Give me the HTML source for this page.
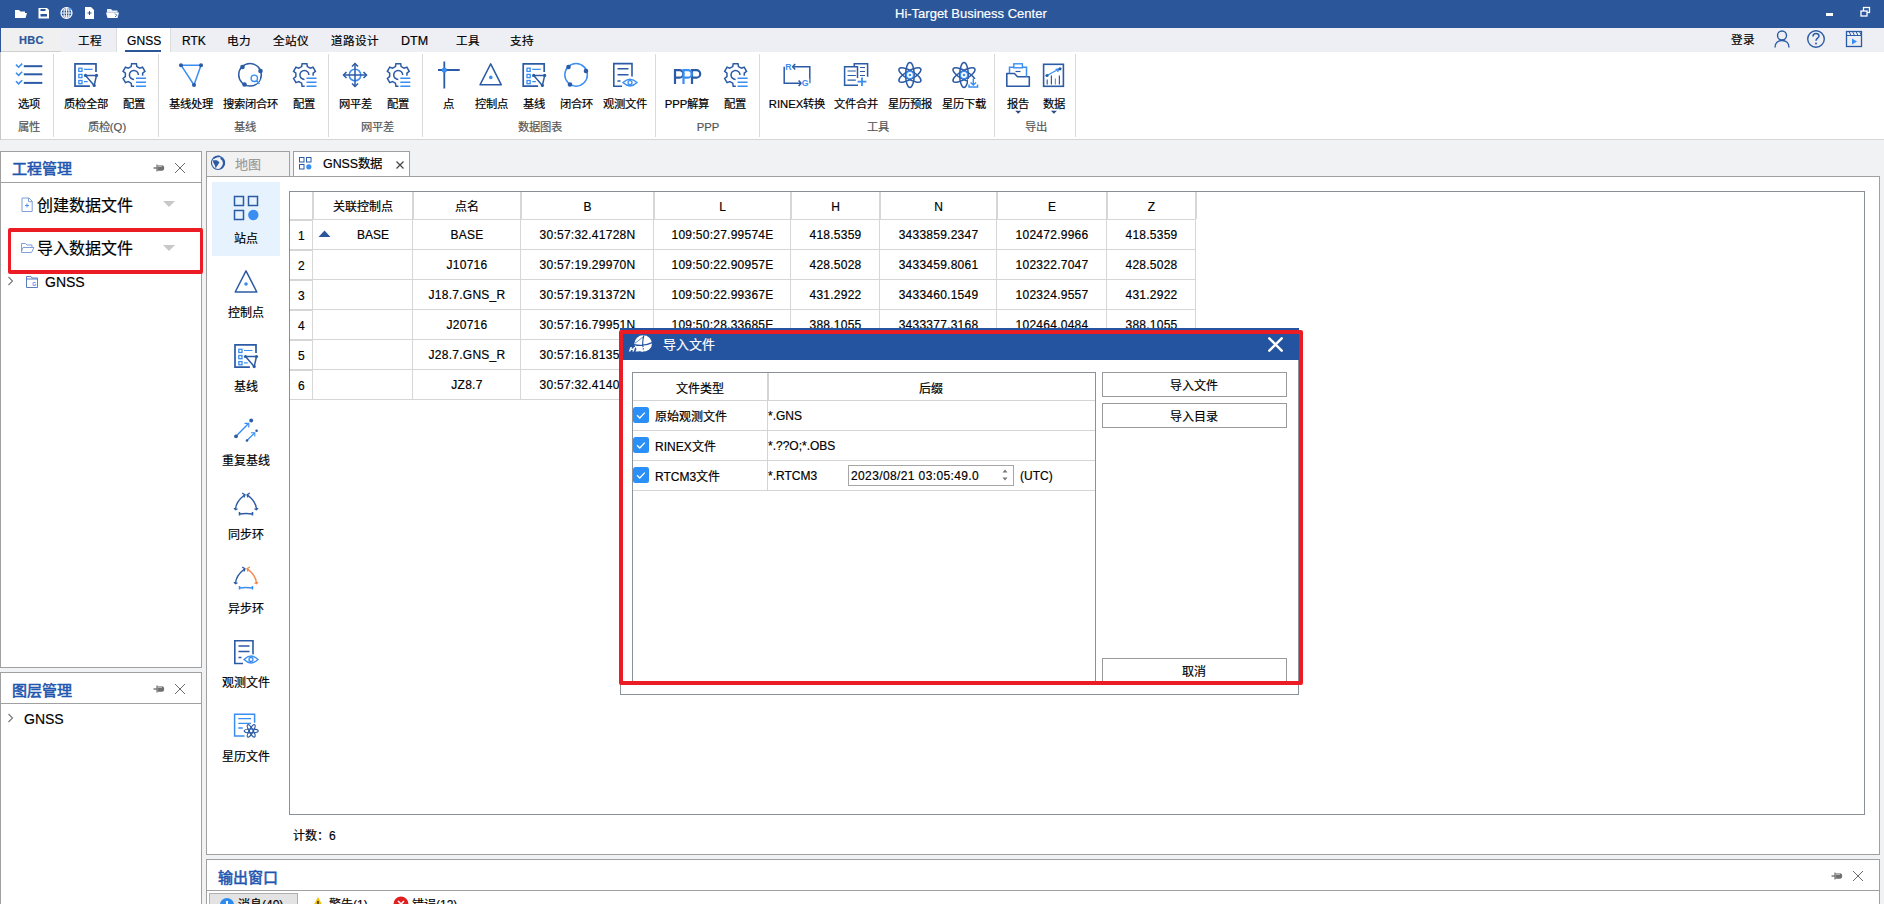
<!DOCTYPE html>
<html lang="zh-CN"><head><meta charset="utf-8">
<style>
*{box-sizing:border-box;margin:0;padding:0}
html,body{width:1884px;height:904px;overflow:hidden;background:#f1f2f4;font-family:"Liberation Sans",sans-serif;color:#000;position:relative}
.a{position:absolute}
.t{position:absolute;white-space:nowrap;line-height:1;-webkit-text-stroke:0.18px currentColor}
svg{position:absolute;overflow:visible}
</style></head><body>

<div class="a" style="left:0px;top:0px;width:1884px;height:28px;background:#2b579a"></div>
<div class="t" style="left:895px;top:7px;font-size:13px;color:#fff;font-weight:normal;">Hi-Target Business Center</div>
<svg style="left:0px;top:0px" width="130" height="28" viewBox="0 0 130 28" fill="none"><path d="M15 10h4l1.5 1.5h4.5v1.5h-10z M15 13h12l-1.5 5h-10.5z" fill="#fff"/><path d="M38.5 8h8.5l2 2v8.5h-10.5z" fill="#fff"/><rect x="40.5" y="9" width="5" height="2" fill="#2b579a"/><rect x="40.5" y="14" width="6.5" height="2.5" fill="#2b579a"/><circle cx="66.5" cy="13" r="5.5" fill="none" stroke="#fff" stroke-width="1.2"/><path d="M61 13h11M66.5 7.5v11M62 10h9M62 16h9" stroke="#fff" stroke-width="0.9"/><ellipse cx="66.5" cy="13" rx="2.5" ry="5.5" stroke="#fff" stroke-width="0.9"/><circle cx="70" cy="9" r="1.3" fill="#5aa8ff"/><path d="M85 7h6l3 3v9h-9z" fill="#fff"/><path d="M89.5 11v4M87.5 13h4" stroke="#2b579a" stroke-width="1"/><path d="M107 9h4l1.5 1.5h5v2h-10.5z" fill="#fff" opacity="0.9"/><path d="M106 12.5h13l-1.5 5.5h-10z" fill="#fff"/><path d="M115 13.5l1.8 1.8-1.8 1.8" stroke="#2b579a" stroke-width="0.9"/></svg>
<div class="a" style="left:1826px;top:13px;width:7px;height:3px;background:#fff"></div>
<svg style="left:1858px;top:5px" width="14" height="14" viewBox="0 0 14 14" fill="none"><rect x="5.5" y="2.5" width="6" height="5" stroke="#fff" stroke-width="1.3"/><rect x="3" y="6" width="6" height="5" fill="#2b579a" stroke="#fff" stroke-width="1.3"/></svg>
<div class="a" style="left:0px;top:28px;width:1884px;height:24px;background:#eeeff4"></div>
<div class="a" style="left:0px;top:28px;width:1px;height:24px;background:#2b579a"></div>
<div class="a" style="left:1px;top:28px;width:60px;height:23px;background:#f0f0f0"></div>
<div class="a" style="left:1px;top:51px;width:60px;height:1px;background:#cfcfcf"></div>
<div class="t" style="left:19px;top:35px;font-size:11px;color:#2b579a;font-weight:bold;letter-spacing:0.3px">HBC</div>
<div class="t" style="left:78px;top:35px;font-size:11.6px;color:#000;font-weight:normal;">工程</div>
<div class="a" style="left:116px;top:28px;width:55px;height:24px;background:#fff;border-left:1px solid #dcdcdc;border-right:1px solid #dcdcdc"></div>
<div class="a" style="left:125px;top:50px;width:36px;height:2px;background:#2b579a"></div>
<div class="t" style="left:127px;top:35px;font-size:12px;color:#000;font-weight:normal;letter-spacing:0.1px">GNSS</div>
<div class="t" style="left:182px;top:35px;font-size:12px;color:#000;font-weight:normal;">RTK</div>
<div class="t" style="left:227px;top:35px;font-size:11.6px;color:#000;font-weight:normal;">电力</div>
<div class="t" style="left:273px;top:35px;font-size:11.6px;color:#000;font-weight:normal;">全站仪</div>
<div class="t" style="left:331px;top:35px;font-size:11.6px;color:#000;font-weight:normal;">道路设计</div>
<div class="t" style="left:401px;top:35px;font-size:12.5px;color:#000;font-weight:normal;">DTM</div>
<div class="t" style="left:456px;top:35px;font-size:11.6px;color:#000;font-weight:normal;">工具</div>
<div class="t" style="left:510px;top:35px;font-size:11.6px;color:#000;font-weight:normal;">支持</div>
<div class="t" style="left:1731px;top:33.5px;font-size:11.6px;color:#000;font-weight:normal;">登录</div>
<svg style="left:1770px;top:28px" width="110" height="24" viewBox="0 0 110 24" fill="none"><circle cx="12" cy="7.5" r="4.5" stroke="#2c5ba5" stroke-width="1.4"/><path d="M5 19.5c0-4.5 3-7 7-7s7 2.5 7 7" stroke="#2c5ba5" stroke-width="1.4"/><circle cx="46" cy="11" r="8.3" stroke="#2c5ba5" stroke-width="1.4"/><path d="M43 8.5c0-2 1.3-3 3-3s3 1 3 2.6c0 2-3 2.2-3 4.6" stroke="#2c5ba5" stroke-width="1.5"/><circle cx="46" cy="15.5" r="1" fill="#2c5ba5"/><rect x="76.5" y="3.5" width="15" height="15" stroke="#2c5ba5" stroke-width="1.3"/><path d="M76.5 7.5h15M79 3.5l2 4M82.5 3.5l2 4M86 3.5l2 4M89.5 3.5l2 4" stroke="#2c5ba5" stroke-width="1"/><path d="M82 10.5l5 3-5 3z" fill="#3a8ef2"/></svg>
<div class="a" style="left:0px;top:52px;width:1884px;height:88px;background:#fff;border-bottom:1px solid #d6d6d6"></div>
<div class="a" style="left:0px;top:52px;width:1px;height:88px;background:#c8c8c8"></div>
<div class="a" style="left:53px;top:54px;width:1px;height:83px;background:#dadada"></div>
<div class="a" style="left:158px;top:54px;width:1px;height:83px;background:#dadada"></div>
<div class="a" style="left:328px;top:54px;width:1px;height:83px;background:#dadada"></div>
<div class="a" style="left:422px;top:54px;width:1px;height:83px;background:#dadada"></div>
<div class="a" style="left:655px;top:54px;width:1px;height:83px;background:#dadada"></div>
<div class="a" style="left:759px;top:54px;width:1px;height:83px;background:#dadada"></div>
<div class="a" style="left:994px;top:54px;width:1px;height:83px;background:#dadada"></div>
<div class="a" style="left:1075px;top:54px;width:1px;height:83px;background:#dadada"></div>
<div class="t" style="left:29px;top:105.2px;font-size:11.3px;color:#000;font-weight:normal;transform:translate(-50%,-50%);">选项</div>
<div class="t" style="left:86px;top:105.2px;font-size:11.3px;color:#000;font-weight:normal;transform:translate(-50%,-50%);">质检全部</div>
<div class="t" style="left:134px;top:105.2px;font-size:11.3px;color:#000;font-weight:normal;transform:translate(-50%,-50%);">配置</div>
<div class="t" style="left:191px;top:105.2px;font-size:11.3px;color:#000;font-weight:normal;transform:translate(-50%,-50%);">基线处理</div>
<div class="t" style="left:250px;top:105.2px;font-size:11.3px;color:#000;font-weight:normal;transform:translate(-50%,-50%);">搜索闭合环</div>
<div class="t" style="left:304px;top:105.2px;font-size:11.3px;color:#000;font-weight:normal;transform:translate(-50%,-50%);">配置</div>
<div class="t" style="left:355px;top:105.2px;font-size:11.3px;color:#000;font-weight:normal;transform:translate(-50%,-50%);">网平差</div>
<div class="t" style="left:398px;top:105.2px;font-size:11.3px;color:#000;font-weight:normal;transform:translate(-50%,-50%);">配置</div>
<div class="t" style="left:448px;top:105.2px;font-size:11.3px;color:#000;font-weight:normal;transform:translate(-50%,-50%);">点</div>
<div class="t" style="left:491px;top:105.2px;font-size:11.3px;color:#000;font-weight:normal;transform:translate(-50%,-50%);">控制点</div>
<div class="t" style="left:534px;top:105.2px;font-size:11.3px;color:#000;font-weight:normal;transform:translate(-50%,-50%);">基线</div>
<div class="t" style="left:576px;top:105.2px;font-size:11.3px;color:#000;font-weight:normal;transform:translate(-50%,-50%);">闭合环</div>
<div class="t" style="left:625px;top:105.2px;font-size:11.3px;color:#000;font-weight:normal;transform:translate(-50%,-50%);">观测文件</div>
<div class="t" style="left:687px;top:105.2px;font-size:11.3px;color:#000;font-weight:normal;transform:translate(-50%,-50%);">PPP解算</div>
<div class="t" style="left:735px;top:105.2px;font-size:11.3px;color:#000;font-weight:normal;transform:translate(-50%,-50%);">配置</div>
<div class="t" style="left:797px;top:105.2px;font-size:11.3px;color:#000;font-weight:normal;transform:translate(-50%,-50%);">RINEX转换</div>
<div class="t" style="left:856px;top:105.2px;font-size:11.3px;color:#000;font-weight:normal;transform:translate(-50%,-50%);">文件合并</div>
<div class="t" style="left:910px;top:105.2px;font-size:11.3px;color:#000;font-weight:normal;transform:translate(-50%,-50%);">星历预报</div>
<div class="t" style="left:964px;top:105.2px;font-size:11.3px;color:#000;font-weight:normal;transform:translate(-50%,-50%);">星历下载</div>
<div class="t" style="left:1018px;top:105.2px;font-size:11.3px;color:#000;font-weight:normal;transform:translate(-50%,-50%);">报告</div>
<div class="t" style="left:1054px;top:105.2px;font-size:11.3px;color:#000;font-weight:normal;transform:translate(-50%,-50%);">数据</div>
<div class="t" style="left:29px;top:127.8px;font-size:11.3px;color:#555;font-weight:normal;transform:translate(-50%,-50%);">属性</div>
<div class="t" style="left:107px;top:127.8px;font-size:11.3px;color:#555;font-weight:normal;transform:translate(-50%,-50%);">质检(Q)</div>
<div class="t" style="left:245px;top:127.8px;font-size:11.3px;color:#555;font-weight:normal;transform:translate(-50%,-50%);">基线</div>
<div class="t" style="left:377px;top:127.8px;font-size:11.3px;color:#555;font-weight:normal;transform:translate(-50%,-50%);">网平差</div>
<div class="t" style="left:540px;top:127.8px;font-size:11.3px;color:#555;font-weight:normal;transform:translate(-50%,-50%);">数据图表</div>
<div class="t" style="left:708px;top:127.8px;font-size:11.3px;color:#555;font-weight:normal;transform:translate(-50%,-50%);">PPP</div>
<div class="t" style="left:878px;top:127.8px;font-size:11.3px;color:#555;font-weight:normal;transform:translate(-50%,-50%);">工具</div>
<div class="t" style="left:1036px;top:127.8px;font-size:11.3px;color:#555;font-weight:normal;transform:translate(-50%,-50%);">导出</div>
<svg style="left:0px;top:0px" width="1884" height="140" viewBox="0 0 1884 140" fill="none"><path d="M16 64.60000000000001l2.6 2.6 3.6-3.6" stroke="#3a8ef2" stroke-width="1.6"/><path d="M23.8 66.2H42.3" stroke="#2c5ba5" stroke-width="2"/><path d="M16 72.7l2.6 2.6 3.6-3.6" stroke="#3a8ef2" stroke-width="1.6"/><path d="M23.8 74.3H42.3" stroke="#2c5ba5" stroke-width="2"/><path d="M16 81.30000000000001l2.6 2.6 3.6-3.6" stroke="#3a8ef2" stroke-width="1.6"/><path d="M23.8 82.9H42.3" stroke="#2c5ba5" stroke-width="2"/><path d="M89.9 86.1H75V63.8H96V71.9" stroke="#2c5ba5" stroke-width="1.7"/><rect x="78.8" y="68.2" width="3.2" height="3.2" stroke="#3a8ef2" stroke-width="1.3"/><rect x="78.8" y="74.4" width="3.2" height="3.2" stroke="#3a8ef2" stroke-width="1.3"/><rect x="78.8" y="80.5" width="3.2" height="3.2" stroke="#3a8ef2" stroke-width="1.3"/><path d="M84 69.4H92.5 M84 75.6H85 M84 81.7H87.7" stroke="#3a8ef2" stroke-width="1.2"/><path d="M85.5 75.4H96.5L94.2 85.5Z" stroke="#2c5ba5" stroke-width="1.5" stroke-linejoin="round"/><circle cx="85.5" cy="75.4" r="1.6" fill="#2c5ba5"/><circle cx="96.5" cy="75.4" r="1.6" fill="#2c5ba5"/><circle cx="94.2" cy="85.5" r="1.6" fill="#2c5ba5"/><path d="M131.14 66.58 L131.61 63.65 L136.39 63.65 L136.86 66.58 L139.77 68.26 L142.55 67.20 L144.94 71.35 L142.64 73.22 L142.64 76.58 L144.94 78.45 L142.55 82.60 L139.77 81.54 L136.86 83.22 L136.39 86.15 L131.61 86.15 L131.14 83.22 L128.23 81.54 L125.45 82.60 L123.06 78.45 L125.36 76.58 L125.36 73.22 L123.06 71.35 L125.45 67.20 L128.23 68.26Z" stroke="#2c5ba5" stroke-width="1.5" stroke-linejoin="miter"/><rect x="136.6" y="75.7" width="12" height="12" fill="#fff"/><rect x="134.2" y="82.9" width="12" height="6" fill="#fff"/><path d="M138.40 74.90 A4.5 4.5 0 1 0 134.00 79.40" stroke="#2c5ba5" stroke-width="1.5"/><path d="M136 78.2H146 M136 82.3H146 M136 86.3H146" stroke="#3a8ef2" stroke-width="1.4"/><path d="M181 65.2H201L194 85Z" stroke="#3a8ef2" stroke-width="1.5" stroke-linejoin="round"/><circle cx="181" cy="65.2" r="2" fill="#2c5ba5"/><circle cx="201" cy="65.2" r="2" fill="#2c5ba5"/><circle cx="194" cy="85" r="2" fill="#2c5ba5"/><circle cx="250" cy="74.8" r="11.3" stroke="#2c5ba5" stroke-width="1.5"/><circle cx="254.5" cy="78.5" r="5.2" fill="#fff"/><circle cx="254.3" cy="78.3" r="3.2" stroke="#3a8ef2" stroke-width="1.4"/><path d="M256.6 80.7L259.5 83.7" stroke="#3a8ef2" stroke-width="1.6"/><circle cx="242.5" cy="67" r="2.3" fill="#2c5ba5"/><circle cx="260.5" cy="71" r="2.3" fill="#2c5ba5"/><circle cx="244.5" cy="84.5" r="2.3" fill="#2c5ba5"/><path d="M301.64 66.58 L302.11 63.65 L306.89 63.65 L307.36 66.58 L310.27 68.26 L313.05 67.20 L315.44 71.35 L313.14 73.22 L313.14 76.58 L315.44 78.45 L313.05 82.60 L310.27 81.54 L307.36 83.22 L306.89 86.15 L302.11 86.15 L301.64 83.22 L298.73 81.54 L295.95 82.60 L293.56 78.45 L295.86 76.58 L295.86 73.22 L293.56 71.35 L295.95 67.20 L298.73 68.26Z" stroke="#2c5ba5" stroke-width="1.5" stroke-linejoin="miter"/><rect x="307.1" y="75.7" width="12" height="12" fill="#fff"/><rect x="304.7" y="82.9" width="12" height="6" fill="#fff"/><path d="M308.90 74.90 A4.5 4.5 0 1 0 304.50 79.40" stroke="#2c5ba5" stroke-width="1.5"/><path d="M306.5 78.2H316.5 M306.5 82.3H316.5 M306.5 86.3H316.5" stroke="#3a8ef2" stroke-width="1.4"/><circle cx="355" cy="75" r="5.8" stroke="#3a8ef2" stroke-width="1.5"/><path d="M355 63.5V86.5M343.5 75H366.5" stroke="#2c5ba5" stroke-width="1.5"/><path d="M352 66.5l3-3 3 3M352 83.5l3 3 3-3M346.5 72l-3 3 3 3M363.5 72l3 3-3 3" stroke="#2c5ba5" stroke-width="1.5"/><path d="M395.44 66.58 L395.91 63.65 L400.69 63.65 L401.16 66.58 L404.07 68.26 L406.85 67.20 L409.24 71.35 L406.94 73.22 L406.94 76.58 L409.24 78.45 L406.85 82.60 L404.07 81.54 L401.16 83.22 L400.69 86.15 L395.91 86.15 L395.44 83.22 L392.53 81.54 L389.75 82.60 L387.36 78.45 L389.66 76.58 L389.66 73.22 L387.36 71.35 L389.75 67.20 L392.53 68.26Z" stroke="#2c5ba5" stroke-width="1.5" stroke-linejoin="miter"/><rect x="400.90000000000003" y="75.7" width="12" height="12" fill="#fff"/><rect x="398.5" y="82.9" width="12" height="6" fill="#fff"/><path d="M402.70 74.90 A4.5 4.5 0 1 0 398.30 79.40" stroke="#2c5ba5" stroke-width="1.5"/><path d="M400.3 78.2H410.3 M400.3 82.3H410.3 M400.3 86.3H410.3" stroke="#3a8ef2" stroke-width="1.4"/><path d="M444.3 61.6V88.4M438 70H459.7" stroke="#2c5ba5" stroke-width="1.8"/><circle cx="444.3" cy="70" r="2.6" fill="#3a8ef2"/><path d="M490.7 63.8L501.3 84.8H480Z" stroke="#2c5ba5" stroke-width="1.5" stroke-linejoin="round"/><circle cx="490.8" cy="77.4" r="1.8" fill="#3a8ef2"/><path d="M538.1 86.1H523.2V63.8H544.2V71.9" stroke="#2c5ba5" stroke-width="1.7"/><rect x="527.0" y="68.2" width="3.2" height="3.2" stroke="#3a8ef2" stroke-width="1.3"/><rect x="527.0" y="74.4" width="3.2" height="3.2" stroke="#3a8ef2" stroke-width="1.3"/><rect x="527.0" y="80.5" width="3.2" height="3.2" stroke="#3a8ef2" stroke-width="1.3"/><path d="M532.2 69.4H540.7 M532.2 75.6H533.2 M532.2 81.7H535.9000000000001" stroke="#3a8ef2" stroke-width="1.2"/><path d="M533.7 75.4H544.7L542.4000000000001 85.5Z" stroke="#2c5ba5" stroke-width="1.5" stroke-linejoin="round"/><circle cx="533.7" cy="75.4" r="1.6" fill="#2c5ba5"/><circle cx="544.7" cy="75.4" r="1.6" fill="#2c5ba5"/><circle cx="542.4000000000001" cy="85.5" r="1.6" fill="#2c5ba5"/><circle cx="576.1" cy="74.85" r="11.3" stroke="#3a8ef2" stroke-width="1.5"/><circle cx="568.5" cy="67" r="2.3" fill="#2c5ba5"/><circle cx="586" cy="71" r="2.3" fill="#2c5ba5"/><circle cx="570" cy="84.5" r="2.3" fill="#2c5ba5"/><path d="M622 86.3H613.8V63.6H632V76.5" stroke="#2c5ba5" stroke-width="1.6"/><path d="M617.5 68.8H628.5M617.5 74.7H628.5M617.5 80.9H620.5" stroke="#2c5ba5" stroke-width="1.5"/><ellipse cx="630" cy="82.6" rx="9" ry="5" fill="#fff"/><path d="M623 82.6Q630 75.8 637 82.6Q630 89.4 623 82.6Z" stroke="#3a8ef2" stroke-width="1.4"/><circle cx="630" cy="82.6" r="2" stroke="#3a8ef2" stroke-width="1.3"/><path d="M675 84V70.2H679.5A3.7 3.7 0 0 1 679.5 77.6H675" stroke="#2c5ba5" stroke-width="2.2"/><path d="M692 84V70.2H696.5A3.7 3.7 0 0 1 696.5 77.6H692" stroke="#2c5ba5" stroke-width="2.2"/><path d="M683.5 84V70.2H688.0A3.7 3.7 0 0 1 688.0 77.6H683.5" stroke="#3a8ef2" stroke-width="2.2"/><path d="M732.74 66.58 L733.21 63.65 L737.99 63.65 L738.46 66.58 L741.37 68.26 L744.15 67.20 L746.54 71.35 L744.24 73.22 L744.24 76.58 L746.54 78.45 L744.15 82.60 L741.37 81.54 L738.46 83.22 L737.99 86.15 L733.21 86.15 L732.74 83.22 L729.83 81.54 L727.05 82.60 L724.66 78.45 L726.96 76.58 L726.96 73.22 L724.66 71.35 L727.05 67.20 L729.83 68.26Z" stroke="#2c5ba5" stroke-width="1.5" stroke-linejoin="miter"/><rect x="738.2" y="75.7" width="12" height="12" fill="#fff"/><rect x="735.8000000000001" y="82.9" width="12" height="6" fill="#fff"/><path d="M740.00 74.90 A4.5 4.5 0 1 0 735.60 79.40" stroke="#2c5ba5" stroke-width="1.5"/><path d="M737.6 78.2H747.6 M737.6 82.3H747.6 M737.6 86.3H747.6" stroke="#3a8ef2" stroke-width="1.4"/><path d="M793.5 66.8H809.8V83.2M784.2 66.8V83.2H801" stroke="#2c5ba5" stroke-width="1.5"/><path d="M795.2 64L792.6 66.8L795.2 69.6M798.6 80.4L801.2 83.2L798.6 86" stroke="#2c5ba5" stroke-width="1.5"/><rect x="785" y="63" width="7" height="8" fill="#fff"/><rect x="801.8" y="78.5" width="7.5" height="8" fill="#fff"/><text x="785.3" y="70.3" font-size="8.8" font-weight="bold" fill="#3a8ef2" font-family="Liberation Sans">R</text><text x="801.8" y="85.6" font-size="8.8" font-weight="bold" fill="#3a8ef2" font-family="Liberation Sans">G</text><path d="M854.3 67V63.8H867.6V76.8" stroke="#2c5ba5" stroke-width="1.5"/><path d="M860 67.5H865M860 71.5H865M860 75.5H865" stroke="#2c5ba5" stroke-width="1.2"/><path d="M858 85.3H844.6V66.7H857.5V78" stroke="#2c5ba5" stroke-width="1.5"/><path d="M847.5 71H855.8M847.5 75.5H855.8M847.5 80.2H855.8" stroke="#2c5ba5" stroke-width="1.2"/><path d="M862 77.4V86M857.6 81.7H866.4" stroke="#3a8ef2" stroke-width="1.8"/><ellipse cx="909.9" cy="75" rx="12.5" ry="4.3" transform="rotate(90 909.9 75)" stroke="#2c5ba5" stroke-width="1.5"/><ellipse cx="909.9" cy="75" rx="12.5" ry="4.3" transform="rotate(30 909.9 75)" stroke="#2c5ba5" stroke-width="1.5"/><ellipse cx="909.9" cy="75" rx="12.5" ry="4.3" transform="rotate(150 909.9 75)" stroke="#2c5ba5" stroke-width="1.5"/><circle cx="909.9" cy="75" r="3.6" fill="#fff" stroke="#3a8ef2" stroke-width="1.3"/><circle cx="909.9" cy="75" r="1.3" fill="#3a8ef2"/><ellipse cx="964" cy="75" rx="12.5" ry="4.3" transform="rotate(90 964 75)" stroke="#2c5ba5" stroke-width="1.5"/><ellipse cx="964" cy="75" rx="12.5" ry="4.3" transform="rotate(30 964 75)" stroke="#2c5ba5" stroke-width="1.5"/><ellipse cx="964" cy="75" rx="12.5" ry="4.3" transform="rotate(150 964 75)" stroke="#2c5ba5" stroke-width="1.5"/><circle cx="964" cy="75" r="3.6" fill="#fff" stroke="#3a8ef2" stroke-width="1.3"/><circle cx="964" cy="75" r="1.3" fill="#3a8ef2"/><rect x="968" y="79" width="11" height="10" fill="#fff"/><path d="M973.3 78.5V85M970.6 82.4l2.7 2.7 2.7-2.7M969 84.5V87H977.6V84.5" stroke="#3a8ef2" stroke-width="1.4"/><path d="M1006.8 73.5H1014.5L1017.5 76.8H1029.3V86.3H1006.8Z" stroke="#2c5ba5" stroke-width="1.6" stroke-linejoin="round"/><path d="M1009.5 73.2V67.3H1026.5V76.5" stroke="#3a8ef2" stroke-width="1.5"/><rect x="1013.8" y="63.8" width="8.6" height="4" fill="#fff" stroke="#3a8ef2" stroke-width="1.4"/><path d="M1015.5 71.5H1020.5" stroke="#2c5ba5" stroke-width="1.2"/><rect x="1043.6" y="64.3" width="19.8" height="22" stroke="#2c5ba5" stroke-width="1.6"/><path d="M1047.2 84.5V79.5M1051.4 84.5V75.5M1059.4 84.5V75.5" stroke="#2c5ba5" stroke-width="1.2"/><path d="M1055.4 84.5V78.5" stroke="#6f95d6" stroke-width="1.2"/><path d="M1047 75.5L1058.5 69.2M1055.5 69.3L1058.8 69L1057.6 72" stroke="#3a8ef2" stroke-width="1.3"/><circle cx="1047" cy="75.5" r="1.6" fill="#2c5ba5"/><circle cx="1060" cy="68.8" r="1.6" fill="#2c5ba5"/><path d="M1015.2 110.8h6l-3 3z M1050.9 110.8h6l-3 3z" fill="#2b4a80"/></svg>
<div class="a" style="left:0px;top:151px;width:202px;height:517px;background:#fff;border:1px solid #a0a0a0"></div>
<div class="a" style="left:1px;top:182px;width:200px;height:1px;background:#a0a0a0"></div>
<div class="t" style="left:12px;top:161px;font-size:15px;color:#1f56b0;font-weight:normal;-webkit-text-stroke:0.55px #1f56b0">工程管理</div>
<svg style="left:153px;top:160px" width="32" height="16" viewBox="0 0 32 16" fill="none"><path d="M0.5 8h3.5" stroke="#707070" stroke-width="1.4"/><path d="M4 4.5v7" stroke="#707070" stroke-width="1.2"/><path d="M4.5 5.3h4.5q2.2 0 2.2 2.7t-2.2 2.7h-4.5z" fill="#707070"/><path d="M5 6.2h4" stroke="#fff" stroke-width="0.7"/><path d="M22 3l10 10M32 3l-10 10" stroke="#6a6a6a" stroke-width="1"/></svg>
<svg style="left:21px;top:197px" width="14" height="16" viewBox="0 0 14 16" fill="none"><path d="M1 1h7l3.2 3.2v10.3h-10.2z" stroke="#7f9fd6" stroke-width="1"/><path d="M7.5 1v3.7h3.7" stroke="#7f9fd6" stroke-width="1"/><path d="M6 6.5v4M4 8.5h4" stroke="#4d8ff0" stroke-width="1"/></svg>
<div class="t" style="left:37px;top:198px;font-size:16px;color:#000;font-weight:normal;">创建数据文件</div>
<svg style="left:163px;top:200px" width="12" height="8" viewBox="0 0 12 8" fill="none"><path d="M0 1h12l-6 6z" fill="#c8c8c8"/></svg>
<svg style="left:20px;top:241px" width="15" height="13" viewBox="0 0 15 13" fill="none"><path d="M1.5 2.5h4l1.5 1.5h5v2" stroke="#7f9fd6" stroke-width="1"/><path d="M1.5 2.5v9h10l2.5-5h-11l-1.5 4" stroke="#7f9fd6" stroke-width="1"/></svg>
<div class="t" style="left:37px;top:241px;font-size:16px;color:#000;font-weight:normal;">导入数据文件</div>
<svg style="left:163px;top:244px" width="12" height="8" viewBox="0 0 12 8" fill="none"><path d="M0 1h12l-6 6z" fill="#c8c8c8"/></svg>
<svg style="left:7px;top:276px" width="8" height="10" viewBox="0 0 8 10" fill="none"><path d="M1.5 1l4 4-4 4" stroke="#777" stroke-width="1.1"/></svg>
<svg style="left:25px;top:275px" width="14" height="14" viewBox="0 0 14 14" fill="none"><path d="M1.5 1.5h4.5l1 1.5h5.5v9.5h-11z M1.5 4h11" stroke="#5b7fc0" stroke-width="1"/><text x="7.2" y="11.3" font-size="5" fill="#3a8ef2" font-family="Liberation Sans" font-weight="bold">G</text></svg>
<div class="t" style="left:45px;top:275px;font-size:14px;color:#000;font-weight:normal;">GNSS</div>
<div class="a" style="left:0px;top:672px;width:202px;height:240px;background:#fff;border:1px solid #a0a0a0"></div>
<div class="a" style="left:1px;top:703px;width:200px;height:1px;background:#a0a0a0"></div>
<div class="t" style="left:12px;top:683px;font-size:15px;color:#1f56b0;font-weight:normal;-webkit-text-stroke:0.55px #1f56b0">图层管理</div>
<svg style="left:153px;top:681px" width="32" height="16" viewBox="0 0 32 16" fill="none"><path d="M0.5 8h3.5" stroke="#707070" stroke-width="1.4"/><path d="M4 4.5v7" stroke="#707070" stroke-width="1.2"/><path d="M4.5 5.3h4.5q2.2 0 2.2 2.7t-2.2 2.7h-4.5z" fill="#707070"/><path d="M5 6.2h4" stroke="#fff" stroke-width="0.7"/><path d="M22 3l10 10M32 3l-10 10" stroke="#6a6a6a" stroke-width="1"/></svg>
<svg style="left:7px;top:713px" width="8" height="10" viewBox="0 0 8 10" fill="none"><path d="M1.5 1l4 4-4 4" stroke="#777" stroke-width="1.1"/></svg>
<div class="t" style="left:24px;top:712px;font-size:14px;color:#000;font-weight:normal;">GNSS</div>
<div class="a" style="left:206px;top:151px;width:84px;height:26px;background:#f2f2f2;border:1px solid #a0a0a0;border-bottom:none"></div>
<svg style="left:0px;top:0px" width="300" height="200" viewBox="0 0 300 200" fill="none"><circle cx="218.05" cy="162.85" r="6.6" stroke="#2c5ba5" stroke-width="1.1"/><path d="M213.5 158.3Q216.5 155.6 220 156.6" stroke="#2c5ba5" stroke-width="1.6"/><path d="M213 160.2L216.8 160.3L219.5 162.3L217.8 165L215.6 168.3L214.8 165.2L213.3 162.8Z" fill="#2c5ba5"/><path d="M220.6 157Q225.6 159.6 224.7 164.6Q223.7 168.2 219.3 169.3Q222.8 166.4 223 163.2Q223.1 160.4 220.3 158.8Z" fill="#2c5ba5"/></svg>
<div class="t" style="left:235px;top:158px;font-size:13px;color:#9a9a9a;font-weight:normal;">地图</div>
<div class="a" style="left:293px;top:151px;width:117px;height:26px;background:#fff;border:1px solid #a0a0a0;border-bottom:none"></div>
<svg style="left:298px;top:156px" width="14" height="14" viewBox="0 0 14 14" fill="none"><rect x="1.5" y="1.5" width="4.5" height="4.5" stroke="#2c5ba5" stroke-width="1"/><rect x="8.5" y="1.5" width="4.5" height="4.5" stroke="#2c5ba5" stroke-width="1"/><rect x="1.5" y="8.5" width="4.5" height="4.5" stroke="#2c5ba5" stroke-width="1"/><circle cx="10.8" cy="10.8" r="2.6" fill="#3a8ef2"/></svg>
<div class="t" style="left:323px;top:158px;font-size:12.4px;color:#000;font-weight:normal;">GNSS数据</div>
<svg style="left:396px;top:161px" width="8" height="8" viewBox="0 0 8 8" fill="none"><path d="M0.5 0.5l7 7M7.5 0.5l-7 7" stroke="#444" stroke-width="1.2"/></svg>
<div class="a" style="left:206px;top:176px;width:1674px;height:679px;background:#fff;border:1px solid #a0a0a0"></div>
<div class="a" style="left:212px;top:182px;width:68px;height:74px;background:#e6f2fd"></div>
<svg style="left:0px;top:0px" width="300" height="800" viewBox="0 0 300 800" fill="none"><rect x="234.5" y="196.5" width="9" height="9" stroke="#2c5ba5" stroke-width="1.5"/><rect x="248.5" y="196.5" width="9" height="9" stroke="#2c5ba5" stroke-width="1.5"/><rect x="234.5" y="210.5" width="9" height="9" stroke="#2c5ba5" stroke-width="1.5"/><circle cx="253.3" cy="215" r="5.2" fill="#3a8ef2"/><path d="M246 270.8L256.8 292H235.2Z" stroke="#2c5ba5" stroke-width="1.5" stroke-linejoin="round"/><circle cx="246" cy="284" r="1.8" fill="#3a8ef2"/><path d="M249.9 367.2H235V344.9H256V353" stroke="#2c5ba5" stroke-width="1.7"/><rect x="238.8" y="349.3" width="3.2" height="3.2" stroke="#3a8ef2" stroke-width="1.3"/><rect x="238.8" y="355.5" width="3.2" height="3.2" stroke="#3a8ef2" stroke-width="1.3"/><rect x="238.8" y="361.6" width="3.2" height="3.2" stroke="#3a8ef2" stroke-width="1.3"/><path d="M244 350.5H252.5 M244 356.7H245 M244 362.8H247.7" stroke="#3a8ef2" stroke-width="1.2"/><path d="M245.5 356.5H256.5L254.2 366.6Z" stroke="#2c5ba5" stroke-width="1.5" stroke-linejoin="round"/><circle cx="245.5" cy="356.5" r="1.6" fill="#2c5ba5"/><circle cx="256.5" cy="356.5" r="1.6" fill="#2c5ba5"/><circle cx="254.2" cy="366.6" r="1.6" fill="#2c5ba5"/><path d="M236 436.3L248.5 423.5" stroke="#3a8ef2" stroke-width="1.4"/><path d="M244.5 423.3H248.8V427.5" stroke="#3a8ef2" stroke-width="1.2"/><circle cx="236" cy="436.3" r="1.9" fill="#2c5ba5"/><circle cx="251.2" cy="420.5" r="1.9" fill="#2c5ba5"/><path d="M247 440.5L254.5 433" stroke="#3a8ef2" stroke-width="1.3"/><path d="M251 432.8H254.8V436.5" stroke="#3a8ef2" stroke-width="1.1"/><circle cx="247" cy="440.5" r="1.3" fill="#2c5ba5"/><circle cx="256.6" cy="430.8" r="1.3" fill="#2c5ba5"/><path d="M244.5 495.0Q236 501.5 235.5 509.3" stroke="#2c5ba5" stroke-width="1.5"/><path d="M242.2 493.1L245 494.7L244 497.5M234 508.1L235.5 509.8L237.5 508.7" stroke="#2c5ba5" stroke-width="1.3"/><path d="M247.5 495.0Q256 501.5 256.5 509.3" stroke="#2c5ba5" stroke-width="1.5"/><path d="M249.8 493.1L247 494.7L248 497.5M258 508.1L256.5 509.8L254.5 508.7" stroke="#2c5ba5" stroke-width="1.3"/><path d="M239.5 512.0V515.5M252.5 512.0V515.5M239.5 514.0Q246 513.0 252.5 514.0" stroke="#2c5ba5" stroke-width="1.5"/><path d="M244.5 569.0Q236 575.5 235.5 583.3" stroke="#2c5ba5" stroke-width="1.5"/><path d="M242.2 567.1L245 568.7L244 571.5M234 582.1L235.5 583.8L237.5 582.7" stroke="#2c5ba5" stroke-width="1.3"/><path d="M247.5 569.0Q256 575.5 256.5 583.3" stroke="#f08a4b" stroke-width="1.5"/><path d="M249.8 567.1L247 568.7L248 571.5M258 582.1L256.5 583.8L254.5 582.7" stroke="#f08a4b" stroke-width="1.3"/><path d="M239.5 586.0V589.5M252.5 586.0V589.5M239.5 588.0Q246 587.0 252.5 588.0" stroke="#3a8ef2" stroke-width="1.5"/><path d="M243 663.5H234.8V640.8H253V654.5" stroke="#2c5ba5" stroke-width="1.6"/><path d="M238.5 646H249.5M238.5 651.5H249.5M238.5 657.5H241.5" stroke="#2c5ba5" stroke-width="1.5"/><ellipse cx="251" cy="659.5" rx="8.5" ry="5" fill="#fff"/><path d="M244 659.5Q251 652.7 258 659.5Q251 666.3 244 659.5Z" stroke="#3a8ef2" stroke-width="1.4"/><circle cx="251" cy="659.5" r="2" stroke="#3a8ef2" stroke-width="1.3"/><path d="M244.6 735.9H234.6V714.3H254.6V722.8" stroke="#3a8ef2" stroke-width="1.5"/><path d="M238.3 718.6H251M238.3 723.4H251M238.3 728H242.8" stroke="#3a8ef2" stroke-width="1.3"/><ellipse cx="251.2" cy="730.9" rx="7" ry="1.9" transform="rotate(0 251.2 730.9)" stroke="#2c5ba5" stroke-width="1.2"/><ellipse cx="251.2" cy="730.9" rx="7" ry="1.9" transform="rotate(60 251.2 730.9)" stroke="#2c5ba5" stroke-width="1.2"/><ellipse cx="251.2" cy="730.9" rx="7" ry="1.9" transform="rotate(120 251.2 730.9)" stroke="#2c5ba5" stroke-width="1.2"/></svg>
<div class="t" style="left:246px;top:238.5px;font-size:12px;color:#000;font-weight:normal;transform:translate(-50%,-50%);">站点</div>
<div class="t" style="left:246px;top:312.5px;font-size:12px;color:#000;font-weight:normal;transform:translate(-50%,-50%);">控制点</div>
<div class="t" style="left:246px;top:386.5px;font-size:12px;color:#000;font-weight:normal;transform:translate(-50%,-50%);">基线</div>
<div class="t" style="left:246px;top:460.5px;font-size:12px;color:#000;font-weight:normal;transform:translate(-50%,-50%);">重复基线</div>
<div class="t" style="left:246px;top:534.5px;font-size:12px;color:#000;font-weight:normal;transform:translate(-50%,-50%);">同步环</div>
<div class="t" style="left:246px;top:608.5px;font-size:12px;color:#000;font-weight:normal;transform:translate(-50%,-50%);">异步环</div>
<div class="t" style="left:246px;top:682.5px;font-size:12px;color:#000;font-weight:normal;transform:translate(-50%,-50%);">观测文件</div>
<div class="t" style="left:246px;top:756.5px;font-size:12px;color:#000;font-weight:normal;transform:translate(-50%,-50%);">星历文件</div>
<div class="a" style="left:289px;top:191px;width:1576px;height:624px;background:#fff;border:1px solid #8a8f96"></div>
<div class="a" style="left:312px;top:192px;width:1px;height:207px;background:#d6d6d6"></div>
<div class="a" style="left:412px;top:192px;width:1px;height:207px;background:#d6d6d6"></div>
<div class="a" style="left:520px;top:192px;width:1px;height:207px;background:#d6d6d6"></div>
<div class="a" style="left:653px;top:192px;width:1px;height:207px;background:#d6d6d6"></div>
<div class="a" style="left:790px;top:192px;width:1px;height:207px;background:#d6d6d6"></div>
<div class="a" style="left:879px;top:192px;width:1px;height:207px;background:#d6d6d6"></div>
<div class="a" style="left:996px;top:192px;width:1px;height:207px;background:#d6d6d6"></div>
<div class="a" style="left:1106px;top:192px;width:1px;height:207px;background:#d6d6d6"></div>
<div class="a" style="left:1195px;top:192px;width:1px;height:207px;background:#d6d6d6"></div>
<div class="a" style="left:312px;top:192px;width:2px;height:27px;background:#d6d6d6"></div>
<div class="a" style="left:412px;top:192px;width:2px;height:27px;background:#d6d6d6"></div>
<div class="a" style="left:520px;top:192px;width:2px;height:27px;background:#d6d6d6"></div>
<div class="a" style="left:653px;top:192px;width:2px;height:27px;background:#d6d6d6"></div>
<div class="a" style="left:790px;top:192px;width:2px;height:27px;background:#d6d6d6"></div>
<div class="a" style="left:879px;top:192px;width:2px;height:27px;background:#d6d6d6"></div>
<div class="a" style="left:996px;top:192px;width:2px;height:27px;background:#d6d6d6"></div>
<div class="a" style="left:1106px;top:192px;width:2px;height:27px;background:#d6d6d6"></div>
<div class="a" style="left:1195px;top:192px;width:2px;height:27px;background:#d6d6d6"></div>
<div class="a" style="left:290px;top:219px;width:906px;height:1px;background:#d6d6d6"></div>
<div class="a" style="left:290px;top:249px;width:906px;height:1px;background:#d6d6d6"></div>
<div class="a" style="left:290px;top:279px;width:906px;height:1px;background:#d6d6d6"></div>
<div class="a" style="left:290px;top:309px;width:906px;height:1px;background:#d6d6d6"></div>
<div class="a" style="left:290px;top:339px;width:906px;height:1px;background:#d6d6d6"></div>
<div class="a" style="left:290px;top:369px;width:906px;height:1px;background:#d6d6d6"></div>
<div class="a" style="left:290px;top:399px;width:906px;height:1px;background:#d6d6d6"></div>
<div class="a" style="left:290px;top:219px;width:23px;height:2px;background:#d6d6d6"></div>
<div class="a" style="left:290px;top:249px;width:23px;height:2px;background:#d6d6d6"></div>
<div class="a" style="left:290px;top:279px;width:23px;height:2px;background:#d6d6d6"></div>
<div class="a" style="left:290px;top:309px;width:23px;height:2px;background:#d6d6d6"></div>
<div class="a" style="left:290px;top:339px;width:23px;height:2px;background:#d6d6d6"></div>
<div class="a" style="left:290px;top:369px;width:23px;height:2px;background:#d6d6d6"></div>
<div class="t" style="left:363.0px;top:207px;font-size:12px;color:#000;font-weight:normal;transform:translate(-50%,-50%);">关联控制点</div>
<div class="t" style="left:467.0px;top:207px;font-size:12px;color:#000;font-weight:normal;transform:translate(-50%,-50%);">点名</div>
<div class="t" style="left:587.5px;top:207px;font-size:12px;color:#000;font-weight:normal;transform:translate(-50%,-50%);">B</div>
<div class="t" style="left:722.5px;top:207px;font-size:12px;color:#000;font-weight:normal;transform:translate(-50%,-50%);">L</div>
<div class="t" style="left:835.5px;top:207px;font-size:12px;color:#000;font-weight:normal;transform:translate(-50%,-50%);">H</div>
<div class="t" style="left:938.5px;top:207px;font-size:12px;color:#000;font-weight:normal;transform:translate(-50%,-50%);">N</div>
<div class="t" style="left:1052.0px;top:207px;font-size:12px;color:#000;font-weight:normal;transform:translate(-50%,-50%);">E</div>
<div class="t" style="left:1151.5px;top:207px;font-size:12px;color:#000;font-weight:normal;transform:translate(-50%,-50%);">Z</div>
<div class="t" style="left:298px;top:230.0px;font-size:12px;color:#000;font-weight:normal;">1</div>
<div class="t" style="left:373px;top:235.0px;font-size:12px;color:#000;font-weight:normal;transform:translate(-50%,-50%);">BASE</div>
<div class="t" style="left:467.0px;top:235.0px;font-size:12px;color:#000;font-weight:normal;transform:translate(-50%,-50%);letter-spacing:0.25px">BASE</div>
<div class="t" style="left:587.5px;top:235.0px;font-size:12px;color:#000;font-weight:normal;transform:translate(-50%,-50%);letter-spacing:0.25px">30:57:32.41728N</div>
<div class="t" style="left:722.5px;top:235.0px;font-size:12px;color:#000;font-weight:normal;transform:translate(-50%,-50%);letter-spacing:0.25px">109:50:27.99574E</div>
<div class="t" style="left:835.5px;top:235.0px;font-size:12px;color:#000;font-weight:normal;transform:translate(-50%,-50%);letter-spacing:0.25px">418.5359</div>
<div class="t" style="left:938.5px;top:235.0px;font-size:12px;color:#000;font-weight:normal;transform:translate(-50%,-50%);letter-spacing:0.25px">3433859.2347</div>
<div class="t" style="left:1052.0px;top:235.0px;font-size:12px;color:#000;font-weight:normal;transform:translate(-50%,-50%);letter-spacing:0.25px">102472.9966</div>
<div class="t" style="left:1151.5px;top:235.0px;font-size:12px;color:#000;font-weight:normal;transform:translate(-50%,-50%);letter-spacing:0.25px">418.5359</div>
<div class="t" style="left:298px;top:260.0px;font-size:12px;color:#000;font-weight:normal;">2</div>
<div class="t" style="left:467.0px;top:265.0px;font-size:12px;color:#000;font-weight:normal;transform:translate(-50%,-50%);letter-spacing:0.25px">J10716</div>
<div class="t" style="left:587.5px;top:265.0px;font-size:12px;color:#000;font-weight:normal;transform:translate(-50%,-50%);letter-spacing:0.25px">30:57:19.29970N</div>
<div class="t" style="left:722.5px;top:265.0px;font-size:12px;color:#000;font-weight:normal;transform:translate(-50%,-50%);letter-spacing:0.25px">109:50:22.90957E</div>
<div class="t" style="left:835.5px;top:265.0px;font-size:12px;color:#000;font-weight:normal;transform:translate(-50%,-50%);letter-spacing:0.25px">428.5028</div>
<div class="t" style="left:938.5px;top:265.0px;font-size:12px;color:#000;font-weight:normal;transform:translate(-50%,-50%);letter-spacing:0.25px">3433459.8061</div>
<div class="t" style="left:1052.0px;top:265.0px;font-size:12px;color:#000;font-weight:normal;transform:translate(-50%,-50%);letter-spacing:0.25px">102322.7047</div>
<div class="t" style="left:1151.5px;top:265.0px;font-size:12px;color:#000;font-weight:normal;transform:translate(-50%,-50%);letter-spacing:0.25px">428.5028</div>
<div class="t" style="left:298px;top:290.0px;font-size:12px;color:#000;font-weight:normal;">3</div>
<div class="t" style="left:467.0px;top:295.0px;font-size:12px;color:#000;font-weight:normal;transform:translate(-50%,-50%);letter-spacing:0.25px">J18.7.GNS_R</div>
<div class="t" style="left:587.5px;top:295.0px;font-size:12px;color:#000;font-weight:normal;transform:translate(-50%,-50%);letter-spacing:0.25px">30:57:19.31372N</div>
<div class="t" style="left:722.5px;top:295.0px;font-size:12px;color:#000;font-weight:normal;transform:translate(-50%,-50%);letter-spacing:0.25px">109:50:22.99367E</div>
<div class="t" style="left:835.5px;top:295.0px;font-size:12px;color:#000;font-weight:normal;transform:translate(-50%,-50%);letter-spacing:0.25px">431.2922</div>
<div class="t" style="left:938.5px;top:295.0px;font-size:12px;color:#000;font-weight:normal;transform:translate(-50%,-50%);letter-spacing:0.25px">3433460.1549</div>
<div class="t" style="left:1052.0px;top:295.0px;font-size:12px;color:#000;font-weight:normal;transform:translate(-50%,-50%);letter-spacing:0.25px">102324.9557</div>
<div class="t" style="left:1151.5px;top:295.0px;font-size:12px;color:#000;font-weight:normal;transform:translate(-50%,-50%);letter-spacing:0.25px">431.2922</div>
<div class="t" style="left:298px;top:320.0px;font-size:12px;color:#000;font-weight:normal;">4</div>
<div class="t" style="left:467.0px;top:325.0px;font-size:12px;color:#000;font-weight:normal;transform:translate(-50%,-50%);letter-spacing:0.25px">J20716</div>
<div class="t" style="left:587.5px;top:325.0px;font-size:12px;color:#000;font-weight:normal;transform:translate(-50%,-50%);letter-spacing:0.25px">30:57:16.79951N</div>
<div class="t" style="left:722.5px;top:325.0px;font-size:12px;color:#000;font-weight:normal;transform:translate(-50%,-50%);letter-spacing:0.25px">109:50:28.33685E</div>
<div class="t" style="left:835.5px;top:325.0px;font-size:12px;color:#000;font-weight:normal;transform:translate(-50%,-50%);letter-spacing:0.25px">388.1055</div>
<div class="t" style="left:938.5px;top:325.0px;font-size:12px;color:#000;font-weight:normal;transform:translate(-50%,-50%);letter-spacing:0.25px">3433377.3168</div>
<div class="t" style="left:1052.0px;top:325.0px;font-size:12px;color:#000;font-weight:normal;transform:translate(-50%,-50%);letter-spacing:0.25px">102464.0484</div>
<div class="t" style="left:1151.5px;top:325.0px;font-size:12px;color:#000;font-weight:normal;transform:translate(-50%,-50%);letter-spacing:0.25px">388.1055</div>
<div class="t" style="left:298px;top:350.0px;font-size:12px;color:#000;font-weight:normal;">5</div>
<div class="t" style="left:467.0px;top:355.0px;font-size:12px;color:#000;font-weight:normal;transform:translate(-50%,-50%);letter-spacing:0.25px">J28.7.GNS_R</div>
<div class="t" style="left:587.5px;top:355.0px;font-size:12px;color:#000;font-weight:normal;transform:translate(-50%,-50%);letter-spacing:0.25px">30:57:16.81354N</div>
<div class="t" style="left:298px;top:380.0px;font-size:12px;color:#000;font-weight:normal;">6</div>
<div class="t" style="left:467.0px;top:385.0px;font-size:12px;color:#000;font-weight:normal;transform:translate(-50%,-50%);letter-spacing:0.25px">JZ8.7</div>
<div class="t" style="left:587.5px;top:385.0px;font-size:12px;color:#000;font-weight:normal;transform:translate(-50%,-50%);letter-spacing:0.25px">30:57:32.41408N</div>
<svg style="left:318px;top:230px" width="13" height="8" viewBox="0 0 13 8" fill="none"><path d="M0.5 7h12l-6-6.5z" fill="#2b579a"/></svg>
<div class="t" style="left:293px;top:830px;font-size:12px;color:#000;font-weight:normal;">计数：6</div>
<div class="a" style="left:206px;top:859px;width:1674px;height:60px;background:#fff;border:1px solid #a0a0a0"></div>
<div class="a" style="left:207px;top:890px;width:1672px;height:1px;background:#a0a0a0"></div>
<div class="t" style="left:218px;top:870px;font-size:15px;color:#1f56b0;font-weight:normal;-webkit-text-stroke:0.55px #1f56b0">输出窗口</div>
<svg style="left:1831px;top:868px" width="32" height="16" viewBox="0 0 32 16" fill="none"><path d="M0.5 8h3.5" stroke="#707070" stroke-width="1.4"/><path d="M4 4.5v7" stroke="#707070" stroke-width="1.2"/><path d="M4.5 5.3h4.5q2.2 0 2.2 2.7t-2.2 2.7h-4.5z" fill="#707070"/><path d="M5 6.2h4" stroke="#fff" stroke-width="0.7"/><path d="M22 3l10 10M32 3l-10 10" stroke="#6a6a6a" stroke-width="1"/></svg>
<div class="a" style="left:209px;top:893px;width:89px;height:20px;background:#e3e3e3;border:1px solid #b0b0b0"></div>
<svg style="left:219px;top:896.5px" width="16" height="16" viewBox="0 0 16 16" fill="none"><circle cx="8" cy="8" r="7" fill="#2d8cf0"/><rect x="7" y="4" width="2" height="6" fill="#fff"/></svg>
<div class="t" style="left:238px;top:899px;font-size:12px;color:#000;font-weight:normal;">消息(40)</div>
<svg style="left:311px;top:896px" width="14" height="14" viewBox="0 0 14 14" fill="none"><path d="M7 1l6.5 12h-13z" fill="#f2c200"/><rect x="6.3" y="5" width="1.4" height="4.5" fill="#222"/></svg>
<div class="t" style="left:329px;top:899px;font-size:12px;color:#000;font-weight:normal;">警告(1)</div>
<svg style="left:393px;top:896px" width="16" height="16" viewBox="0 0 16 16" fill="none"><circle cx="8" cy="8" r="7.5" fill="#e02020"/><path d="M5 5l6 6M11 5l-6 6" stroke="#fff" stroke-width="1.5"/></svg>
<div class="t" style="left:412px;top:899px;font-size:12px;color:#000;font-weight:normal;">错误(12)</div>
<div class="a" style="left:620px;top:328px;width:679px;height:367px;background:#fff;border:1px solid #8c9099"></div>
<div class="a" style="left:620px;top:328px;width:679px;height:32px;background:#2454a0"></div>
<svg style="left:0px;top:0px" width="700" height="400" viewBox="0 0 700 400" fill="none"><ellipse cx="643.2" cy="343.5" rx="8.8" ry="8.3" fill="#fff"/><path d="M643.8 335.3Q641.6 343.5 643.9 352M634.2 344.6Q643 347 652.2 342.6" stroke="#2454a0" stroke-width="1.2"/><path d="M635 343.3L643.5 336.6" stroke="#2454a0" stroke-width="0.7"/><path d="M628.8 351.5l1.6-4.5h1.6l-0.5 1.6h1.8l0.5-1.6h1.6l-1.6 4.5h-1.6l0.6-1.6h-1.8l-0.6 1.6z M635.5 351.5l1.6-4.5h2.5q2 0 1.5 2.2-0.6 2.3-2.6 2.3z M640.5 351.5l0.4-1.2h2q0.6 0 0.7-0.5t-0.5-0.5h-1q-1.6 0-1.2-1.4 0.4-1 2-1h2.4l-0.4 1.2h-2q-0.5 0-0.6 0.4t0.4 0.4h1.2q1.5 0 1.1 1.4-0.4 1.2-2 1.2z" fill="#fff" opacity="0.95"/></svg>
<div class="t" style="left:663px;top:338px;font-size:13px;color:#fff;font-weight:normal;">导入文件</div>
<svg style="left:1268px;top:337px" width="15" height="15" viewBox="0 0 15 15" fill="none"><path d="M1.3 1.3l12.4 12.4M13.7 1.3l-12.4 12.4" stroke="#fff" stroke-width="2.5" stroke-linecap="round"/></svg>
<div class="a" style="left:632px;top:372px;width:464px;height:312px;background:#fff;border:1px solid #8c9099"></div>
<div class="a" style="left:767px;top:373px;width:2px;height:27px;background:#d4d4d4"></div>
<div class="a" style="left:767px;top:400px;width:1px;height:90px;background:#d4d4d4"></div>
<div class="a" style="left:633px;top:400px;width:462px;height:1px;background:#d4d4d4"></div>
<div class="a" style="left:633px;top:430px;width:462px;height:1px;background:#d4d4d4"></div>
<div class="a" style="left:633px;top:460px;width:462px;height:1px;background:#d4d4d4"></div>
<div class="a" style="left:633px;top:490px;width:462px;height:1px;background:#d4d4d4"></div>
<div class="t" style="left:700px;top:389px;font-size:12px;color:#000;font-weight:normal;transform:translate(-50%,-50%);">文件类型</div>
<div class="t" style="left:931px;top:389px;font-size:12px;color:#000;font-weight:normal;transform:translate(-50%,-50%);">后缀</div>
<svg style="left:633px;top:407px" width="16" height="16" viewBox="0 0 16 16" fill="none"><rect x="0" y="0" width="16" height="16" rx="2.5" fill="#2a8ff7"/><path d="M4 8.2l2.8 2.8 5-5.4" stroke="#fff" stroke-width="1.3"/></svg>
<div class="t" style="left:655px;top:416.8px;font-size:12px;color:#000;font-weight:normal;transform:translate(-50%,-50%);transform:translate(0,-50%)">原始观测文件</div>
<div class="t" style="left:768px;top:415.6px;font-size:12px;color:#000;font-weight:normal;transform:translate(-50%,-50%);transform:translate(0,-50%)">*.GNS</div>
<svg style="left:633px;top:437px" width="16" height="16" viewBox="0 0 16 16" fill="none"><rect x="0" y="0" width="16" height="16" rx="2.5" fill="#2a8ff7"/><path d="M4 8.2l2.8 2.8 5-5.4" stroke="#fff" stroke-width="1.3"/></svg>
<div class="t" style="left:655px;top:446.8px;font-size:12px;color:#000;font-weight:normal;transform:translate(-50%,-50%);transform:translate(0,-50%)">RINEX文件</div>
<div class="t" style="left:768px;top:445.6px;font-size:12px;color:#000;font-weight:normal;transform:translate(-50%,-50%);transform:translate(0,-50%)">*.??O;*.OBS</div>
<svg style="left:633px;top:467px" width="16" height="16" viewBox="0 0 16 16" fill="none"><rect x="0" y="0" width="16" height="16" rx="2.5" fill="#2a8ff7"/><path d="M4 8.2l2.8 2.8 5-5.4" stroke="#fff" stroke-width="1.3"/></svg>
<div class="t" style="left:655px;top:476.8px;font-size:12px;color:#000;font-weight:normal;transform:translate(-50%,-50%);transform:translate(0,-50%)">RTCM3文件</div>
<div class="t" style="left:768px;top:475.6px;font-size:12px;color:#000;font-weight:normal;transform:translate(-50%,-50%);transform:translate(0,-50%)">*.RTCM3</div>
<div class="a" style="left:848px;top:465px;width:166px;height:21px;background:#fff;border:1px solid #a6a6a6"></div>
<div class="t" style="left:851px;top:470px;font-size:12px;color:#000;font-weight:normal;letter-spacing:0.38px">2023/08/21 03:05:49.0</div>
<svg style="left:1001px;top:467px" width="8" height="16" viewBox="0 0 8 16" fill="none"><path d="M1.5 5.5l2.5-3 2.5 3zM1.5 10.5l2.5 3 2.5-3z" fill="#777"/></svg>
<div class="t" style="left:1020px;top:470px;font-size:12px;color:#000;font-weight:normal;">(UTC)</div>
<div class="a" style="left:1102px;top:372px;width:185px;height:25px;background:#fff;border:1px solid #9a9a9a"></div>
<div class="t" style="left:1194px;top:386px;font-size:12px;color:#000;font-weight:normal;transform:translate(-50%,-50%);">导入文件</div>
<div class="a" style="left:1102px;top:403px;width:185px;height:25px;background:#fff;border:1px solid #9a9a9a"></div>
<div class="t" style="left:1194px;top:417px;font-size:12px;color:#000;font-weight:normal;transform:translate(-50%,-50%);">导入目录</div>
<div class="a" style="left:1102px;top:658px;width:185px;height:25px;background:#fff;border:1px solid #9a9a9a"></div>
<div class="t" style="left:1194px;top:672px;font-size:12px;color:#000;font-weight:normal;transform:translate(-50%,-50%);">取消</div>
<div class="a" style="left:619px;top:330px;width:684px;height:355px;border:4px solid #ec1c24;border-radius:2px"></div>
<div class="a" style="left:8px;top:228px;width:195px;height:46px;border:4px solid #ec1c24;border-left-width:3.5px;border-right-width:3.5px;border-radius:2px"></div>
</body></html>
